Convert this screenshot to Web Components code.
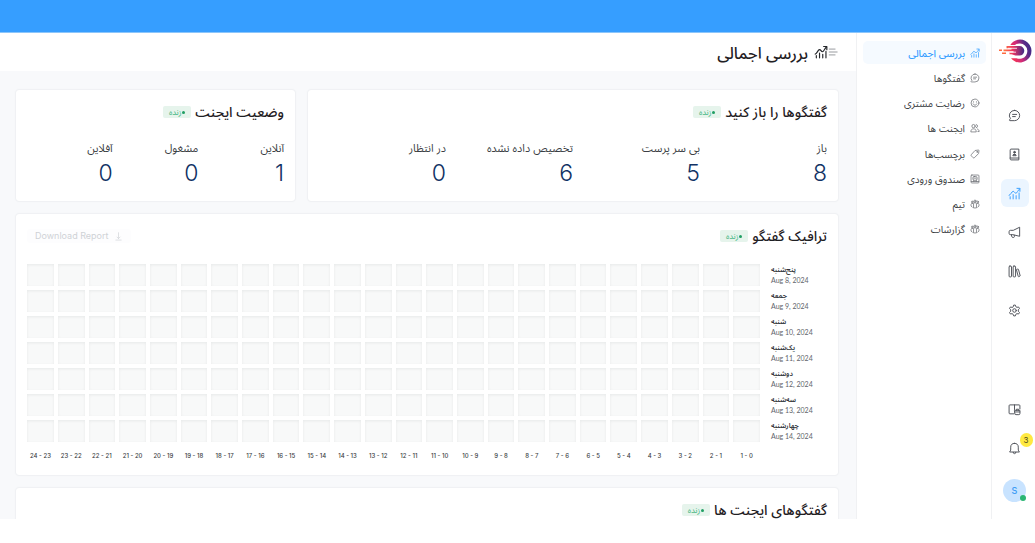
<!DOCTYPE html>
<html lang="fa" dir="rtl">
<head>
<meta charset="utf-8">
<meta name="viewport" content="width=device-width, initial-scale=1">
<title>بررسی اجمالی</title>
<style>
  html, body { height: 100%; margin: 0; }
  body {
    background: #fff;
    color: #1f2023;
    font-family: Inter, "Noto Sans Arabic", "DejaVu Sans", sans-serif;
    --blue: #369eff;
    --line: #f0f1f3;
  }
</style>
</head>
<body>
<dashboard-app></dashboard-app>

<script>
const define = (name, css, html, setup) => {
  const tpl = document.createElement('template');
  tpl.innerHTML = `<style>:host,*{box-sizing:border-box}${css}</style>${html}`;
  customElements.define(name, class extends HTMLElement {
    static observedAttributes = ['name'];
    connectedCallback() {
      if (this.shadowRoot) return;
      this.attachShadow({ mode: 'open' }).append(tpl.content.cloneNode(true));
      if (setup) setup(this, this.shadowRoot);
    }
    attributeChangedCallback() {
      if (this.shadowRoot && setup) setup(this, this.shadowRoot);
    }
  });
};

const ICONS = {
  chart: '<path d="M4 22v-4M9.500 22v-8M15 22v-6M20.500 22V11"/><path d="M2 15.500c3 0 4.500-7.500 7.500-7.500 2.500 0 2.500 3.500 5 3.500S18 6 21.500 3.500"/><path d="M16.500 2.500h5.500V8"/>',
  chat: '<path d="M12 2.500a9.500 9.500 0 1 1 0 19H3.500a1 1 0 0 1-.7-1.700l1.800-1.900A9.500 9.500 0 0 1 12 2.500z"/><path d="M8.500 10h7.500M8.500 14h5"/>',
  smile: '<circle cx="12" cy="12" r="9.500"/><path d="M8.500 9v1M15.500 9v1M7.500 14c1 2.200 2.700 3 4.500 3s3.500-.8 4.500-3"/>',
  people: '<circle cx="8.500" cy="7.500" r="4"/><path d="M2 20.500c0-4 2.500-6.500 6.500-6.500s6.500 2.500 6.500 6.500z"/><path d="M15 3.600a4 4 0 0 1 0 7.800M17.500 14.300c2.800.8 4.500 3 4.500 6.200h-3"/>',
  tag: '<path d="M13 3.500 20 2.500a1.500 1.500 0 0 1 1.600 1.600L20.500 11l-10 10a2 2 0 0 1-2.800 0L3 16.300a2 2 0 0 1 0-2.800z"/><circle cx="17" cy="7" r="1"/>',
  inbox: '<rect x="2.500" y="2.500" width="19" height="19" rx="2"/><rect x="7" y="6" width="10" height="9" rx="3"/><path d="M10 9v2M14 9v2M3 18h18M9 15v3M15 15v3"/>',
  team: '<path d="M8.500 20.500V12a3.500 3.500 0 0 1 7 0v8.500z"/><circle cx="12" cy="5" r="2.500"/><circle cx="5.500" cy="7" r="2"/><circle cx="18.500" cy="7" r="2"/><path d="M5.500 19.500 2.500 17v-4a3 3 0 0 1 4-2.500M18.500 19.500l3-2.500v-4a3 3 0 0 0-4-2.500"/>',
  book: '<path d="M4 3.500A1.500 1.500 0 0 1 5.500 2H20v20H5.500A1.500 1.500 0 0 1 4 20.500zM4 18.500h16"/><circle cx="12" cy="7.800" r="1.600" fill="currentColor"/><path d="M9 13.500c0-3 6-3 6 0z" fill="currentColor"/>',
  horn: '<path d="M21.500 3v16L9 16H4.500A2.500 2.500 0 0 1 2 13.500v-3A2.500 2.500 0 0 1 4.500 8H9z"/><path d="M6 16l1.500 4.500c.6 1.500 4.500 1 4.300-1L11.500 17"/>',
  library: '<rect x="2" y="2" width="4.500" height="20" rx="1.500"/><rect x="9.500" y="2" width="4.500" height="20" rx="1.500"/><path d="m16.300 8 1.800-.5a1 1 0 0 1 1.200.7L22.500 20l-2.500 1.500a1 1 0 0 1-1.200-.7L15.600 9"/>',
  gear: '<path d="M9.500 5 10.500 2h3l1 3 2 1.200 3-.7 1.700 2.700L19 10.700v2.600l2.200 2.500-1.700 2.700-3-.7-2 1.200-1 3h-3l-1-3-2-1.200-3 .7-1.700-2.700L5 13.300v-2.600L2.800 8.200l1.700-2.700 3 .7z"/><circle cx="12" cy="12" r="3.300"/>',
  docs: '<path d="M11 20H3.500A1.500 1.500 0 0 1 2 18.500V5a1.500 1.500 0 0 1 1.500-1.500h17A1.500 1.500 0 0 1 22 5v6M12 3.500V12"/><path d="M12.500 13.500h9.500v6a2 2 0 0 1-2 2h-5.500a2 2 0 0 1-2-2zM15.500 13.500v-2h4v2M12.500 16.500H22"/>',
  bell: '<path d="M12 2.500a7 7 0 0 0-7 7V15l-2 3.500h18L19 15V9.500a7 7 0 0 0-7-7zM9.500 19a2.500 2.500 0 0 0 5 0"/>',
  menu: '<path d="M3 5h14M3 12h19M3 19h14"/>',
  download: '<path d="M12 2v15M8 13.500l4 4 4-4M5 21.500h14"/>'
};

define('ui-icon', `
  :host { display: block; flex: none; width: var(--size, 13px); height: var(--size, 13px); }
  svg { display: block; width: 100%; height: 100%; fill: none; stroke: currentColor;
        stroke-width: var(--stroke, 1.8); stroke-linecap: round; stroke-linejoin: round; }`,
  '<svg viewBox="0 0 24 24" aria-hidden="true"></svg>',
  (el, root) => { root.querySelector('svg').innerHTML = ICONS[el.getAttribute('name')] || ''; });

define('brand-logo', `
  :host { display: block; width: 34px; height: 24px; }
  svg { display: block; width: 100%; height: 100%; }`, `
  <svg viewBox="0 0 34 24" role="img" aria-label="logo">
    <defs><linearGradient id="g" x1="0" x2="1" y1=".7" y2=".3">
      <stop offset="0" stop-color="#f8364f"/><stop offset=".4" stop-color="#d42c78"/><stop offset=".75" stop-color="#5a2a88"/><stop offset="1" stop-color="#3b2a86"/>
    </linearGradient>
    <linearGradient id="h"><stop offset="0" stop-color="#ff7a3c"/><stop offset=".45" stop-color="#ee3562"/><stop offset="1" stop-color="#3f2a88"/></linearGradient></defs>
    <path d="M22 .5a11.500 11.500 0 1 1-9 18.700h5.500A7.700 7.700 0 1 0 17 6h-4.700A11.500 11.500 0 0 1 22 .5z" fill="url(#g)"/>
    <path d="M8.500 7h13a4.800 4.800 0 0 1 0 9.600h-4l-4-1.400h-2v-1.700h4v-1.300H5.500v-1.600h8V9.300h-5z" fill="url(#h)"/>
    <path d="M1 10.500h3v1.600H1zM4 13.500h4v1.600H4z" fill="#ff6a3f"/>
    <path d="M10 9.300h9M12 13.200h6" stroke="#fff" stroke-width=".8"/>
  </svg>`);

define('rail-button', `
  :host { display: block; position: relative; }
  button { display: grid; place-items: center; width: 28px; height: 28px; padding: 0; border: 0;
           border-radius: 6px; background: none; color: #50535a; font: inherit; }
  :host([active]) button { background: #ebf5ff; color: var(--blue); }
  span { position: absolute; top: -1px; right: -4px; width: 13px; height: 14px; border-radius: 7px;
         background: #ffe941; color: #4d4a20; font-size: 8px; line-height: 14px; text-align: center; }
  span:empty { display: none; }`,
  '<button type="button"><ui-icon></ui-icon></button><span></span>',
  (el, root) => {
    root.querySelector('ui-icon').setAttribute('name', el.getAttribute('icon'));
    root.querySelector('button').setAttribute('aria-label', el.getAttribute('label'));
    root.querySelector('span').textContent = el.getAttribute('count') || '';
  });

define('nav-rail', `
  :host { display: flex; flex-direction: column; align-items: center; width: 44px; flex: none;
          padding: 6px 0 17px 2px; border-left: 1px solid var(--line); background: #fff; }
  nav, footer { display: flex; flex-direction: column; align-items: center; gap: 11px; }
  nav { margin-top: 38px; }
  footer { margin-top: auto; }
  .avatar { position: relative; margin-top: 6px; width: 23px; height: 23px; padding: 0; border: 0; border-radius: 50%;
            background: #c8e3ff; color: #3b9bf5; font: 500 9px/23px Inter, sans-serif; }
  .avatar::after { content: ""; position: absolute; right: 0; bottom: 1px; width: 6px; height: 6px;
                   border-radius: 50%; background: #2bb673; }`, `
  <brand-logo></brand-logo>
  <nav>
    <rail-button icon="chat" label="گفتگوها"></rail-button>
    <rail-button icon="book" label="مخاطبین"></rail-button>
    <rail-button icon="chart" label="گزارشات" active></rail-button>
    <rail-button icon="horn" label="کمپین‌ها"></rail-button>
    <rail-button icon="library" label="مرکز راهنما"></rail-button>
    <rail-button icon="gear" label="تنظیمات"></rail-button>
  </nav>
  <footer>
    <rail-button icon="docs" label="مستندات"></rail-button>
    <rail-button icon="bell" label="اعلان‌ها" count="3"></rail-button>
    <button class="avatar" type="button">S</button>
  </footer>`);

define('menu-item', `
  :host { display: block; }
  a { display: flex; align-items: center; gap: 5px; height: 23px; padding: 0 6px; border-radius: 5px;
      color: #3a3d42; font-size: 10px; line-height: 22px; text-decoration: none; white-space: nowrap; }
  ui-icon { --size: 10px; color: #6b6e74; }
  :host([active]) a { background: #f5faff; color: var(--blue); font-weight: 500; }
  :host([active]) ui-icon { color: inherit; }`,
  '<a href="#"><ui-icon></ui-icon><slot></slot></a>',
  (el, root) => root.querySelector('ui-icon').setAttribute('name', el.getAttribute('icon')));

define('side-menu', `
  :host { display: block; width: 135px; flex: none;
          padding: 8px 5px 0 6px; border-left: 1px solid var(--line); background: #fff; }
  nav { display: flex; flex-direction: column; justify-content: space-between; min-height: 200px; }`, `
  <nav>
    <menu-item icon="chart" active>بررسی اجمالی</menu-item>
    <menu-item icon="chat">گفتگوها</menu-item>
    <menu-item icon="smile">رضایت مشتری</menu-item>
    <menu-item icon="people">ایجنت ها</menu-item>
    <menu-item icon="tag">برچسب‌ها</menu-item>
    <menu-item icon="inbox">صندوق ورودی</menu-item>
    <menu-item icon="team">تیم</menu-item>
    <menu-item icon="team">گزارشات</menu-item>
  </nav>`);

define('page-header', `
  :host { display: flex; align-items: center; height: 38px; flex: none; padding: 0 18px; background: #fff; }
  button { padding: 0; border: 0; background: none; color: #777a80; }
  button ui-icon { --size: 10px; }
  .chart { --size: 14px; --stroke: 2; color: #25272b; }
  h1 { margin: 0 6px 0 0; padding-top: 2px; font-size: 16px; line-height: 24px; font-weight: 500; }`, `
  <button type="button" aria-label="منو"><ui-icon name="menu"></ui-icon></button>
  <ui-icon class="chart" name="chart"></ui-icon>
  <h1><slot></slot></h1>`);

define('metric-card', `
  :host { display: block; min-width: 0; padding: 10px 11px 13px; border-radius: 3px; background: #fff;
          box-shadow: 0 0 2px rgba(30, 40, 60, .14); }
  header { display: flex; align-items: center; gap: 4px; height: 24px; }
  h2 { margin: 0; font-size: 14px; line-height: 24px; font-weight: 500; white-space: nowrap; }
  .live { display: flex; align-items: center; justify-content: center; gap: 1px; width: 28px; height: 12px;
          border-radius: 2px; background: #e6f4ec; color: #45b482; font-size: 8px; line-height: 12px; }
  .live::before { content: ""; width: 3px; height: 3px; border-radius: 50%; background: #1f9f63; }
  .action { margin-right: auto; }`, `
  <header><h2></h2><span class="live">زنده</span><div class="action"><slot name="action"></slot></div></header>
  <slot></slot>`,
  (el, root) => { root.querySelector('h2').textContent = el.getAttribute('heading'); });

define('metric-list', `
  :host { display: block; margin-top: 14px; }
  dl { display: grid; grid-auto-flow: column; grid-auto-columns: 1fr; margin: 0; }
  dt { font-size: 11px; line-height: 20px; color: #3c3f45; white-space: nowrap; }
  dd { margin: 0; font-size: 23px; line-height: 30px; font-weight: 300; color: #113264; }`,
  '<dl></dl>',
  (el, root) => {
    root.querySelector('dl').innerHTML = el.getAttribute('items').split(',').map(pair => {
      const [label, value] = pair.split(':');
      return `<div><dt>${label}</dt><dd>${value}</dd></div>`;
    }).join('');
  });

define('download-button', `
  :host { display: block; }
  button { display: flex; align-items: center; gap: 6px; height: 14px; padding: 0 8px; border: 0; border-radius: 3px;
           background: #fdfdfe; color: #cfd2d6; font: 9px/14px Inter, sans-serif; }
  ui-icon { --size: 9px; }`,
  '<button type="button" disabled><ui-icon name="download"></ui-icon><slot></slot></button>');

define('traffic-heatmap', `
  :host { display: block; margin: 12px -4px 0; }
  table { width: 100%; table-layout: fixed; border-collapse: separate; border-spacing: 4px; }
  th, td { padding: 0; }
  .day { width: 63px; }
  tbody tr { height: 22px; }
  tbody td { background: #f8f9f9; box-shadow: inset 0 1px 3px rgba(20, 30, 30, .07); }
  tbody th { padding-left: 7px; direction: ltr; text-align: left; font-weight: 400; white-space: nowrap; }
  b, small { display: block; height: 10px; line-height: 10px; font-size: 7px; }
  b { font-weight: 600; color: #33363b; }
  tbody th > div { height: 22px; padding-top: 1px; }
  small { color: #62656b; font-family: Lato, sans-serif; }
  tfoot th { direction: ltr; height: 20px; font: 500 6px/20px Inter, sans-serif; color: #3a3d42; white-space: nowrap; }`,
  '<table><colgroup><col class="day"></colgroup><tbody></tbody><tfoot><tr><td></td></tr></tfoot></table>',
  (el, root) => {
    const days = ['پنج‌شنبه', 'جمعه', 'شنبه', 'یک‌شنبه', 'دوشنبه', 'سه‌شنبه', 'چهارشنبه'];
    const hours = Array.from({ length: 24 }, (_, i) => i);
    root.querySelector('colgroup').insertAdjacentHTML('beforeend', '<col>'.repeat(24));
    root.querySelector('tbody').innerHTML = days.map((day, i) =>
      `<tr><th scope="row"><div><b>${day}</b><small>Aug ${8 + i}, 2024</small></div></th>${'<td></td>'.repeat(24)}</tr>`).join('');
    root.querySelector('tfoot tr').insertAdjacentHTML('beforeend',
      hours.map(h => `<th scope="col">${h + 1} - ${h}</th>`).join(''));
  });

define('dashboard-app', `
  :host { display: flex; flex-direction: column; height: 100vh; padding-bottom: 24px; overflow: hidden; }
  .banner { height: 33px; flex: none; background: var(--blue); border-bottom: 1px solid #8cc6fb; }
  .shell { display: flex; flex: 1; min-height: 0; }
  main { display: flex; flex-direction: column; flex: 1; min-width: 0; overflow: hidden; background: #f8f9fb; }
  .content { display: flex; flex-direction: column; gap: 13px; padding: 19px 18px 0 16px; }
  .row { display: grid; grid-template-columns: 530fr 279fr; gap: 13px; }
  metric-card { flex: none; }
  .traffic { padding-bottom: 5px; }
  .agents { height: 262px; }`, `
  <div class="banner"></div>
  <div class="shell">
    <nav-rail></nav-rail>
    <side-menu></side-menu>
    <main>
      <page-header>بررسی اجمالی</page-header>
      <div class="content">
        <div class="row">
          <metric-card heading="گفتگوها را باز کنید">
            <metric-list items="باز:8,بی سر پرست:5,تخصیص داده نشده:6,در انتظار:0"></metric-list>
          </metric-card>
          <metric-card heading="وضعیت ایجنت">
            <metric-list items="آنلاین:1,مشغول:0,آفلاین:0"></metric-list>
          </metric-card>
        </div>
        <metric-card class="traffic" heading="ترافیک گفتگو">
          <download-button slot="action">Download Report</download-button>
          <traffic-heatmap></traffic-heatmap>
        </metric-card>
        <metric-card class="agents" heading="گفتگوهای ایجنت ها"></metric-card>
      </div>
    </main>
  </div>`);
</script>
</body>
</html>
